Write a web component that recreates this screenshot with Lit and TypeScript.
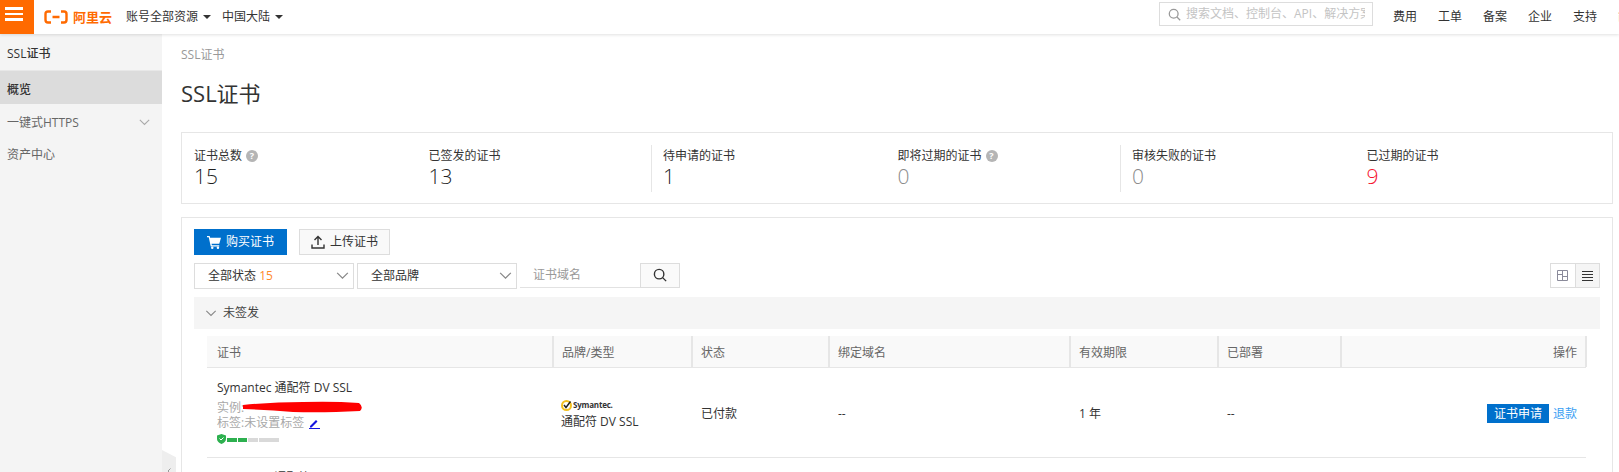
import { LitElement, html, css } from "lit";
import { customElement } from "lit/decorators.js";

const chevron = () => html`<svg viewBox="0 0 14 9" fill="none" stroke="currentColor" stroke-width="1.4"><path d="M1 1l6 6 6-6"/></svg>`;
const help = html`<span class="help">?</span>`;
const searchIcon = () => html`<svg viewBox="0 0 16 16" fill="none" stroke="currentColor" stroke-width="1.6"><circle cx="7" cy="7" r="5.4"/><path d="M11 11l4 4"/></svg>`;

const stats = [
  { label: "证书总数", value: "15", help: true, tone: "" },
  { label: "已签发的证书", value: "13", tone: "" },
  { label: "待申请的证书", value: "1", tone: "", div: true },
  { label: "即将过期的证书", value: "0", help: true, tone: "zero" },
  { label: "审核失败的证书", value: "0", tone: "zero", div: true },
  { label: "已过期的证书", value: "9", tone: "red" },
];
const cols = ["证书", "品牌/类型", "状态", "绑定域名", "有效期限", "已部署", "操作"];

@customElement("app-root")
export class AppRoot extends LitElement {
  static styles = css`
    :host { display: block; width: 1619px; height: 472px; overflow: hidden; background: #fff;
      font: 12px/18px "Open Sans", "Noto Sans CJK SC", sans-serif; color: #333; }
    * { box-sizing: border-box; }
    .top { height: 34px; display: flex; align-items: center; background: #fff; box-shadow: 0 1px 3px rgba(0,0,0,.12); position: relative; z-index: 2; }
    .burger { width: 34px; height: 34px; background: #ff6a00; display: flex; flex-direction: column; gap: 3px; padding: 7px 11px 0 5px; }
    .burger i { display: block; height: 2.5px; background: #fff; }
    .logo { margin-left: 10px; width: 66px; height: 20px; display: flex; flex: none; align-items: center; gap: 5px; color: #ff6a00; font-weight: 700; font-size: 13px; white-space: nowrap; }
    .logo svg { width: 24px; height: 14px; flex: none; }
    .menu { display: flex; align-items: center; margin-left: 16px; white-space: nowrap; color: #333; }
    .menu + .menu { margin-left: 11px; }
    .caret { width: 0; height: 0; border: 4px solid transparent; border-top: 4px solid #333; border-bottom: 0; margin-left: 5px; }
    .spacer { flex: 1; }
    .search { width: 214px; height: 24px; margin-top: -6px; border: 1px solid #ddd; display: flex; flex: none; align-items: center; padding-left: 8px; gap: 5px; color: #c4c4c4; overflow: hidden; white-space: nowrap; margin-right: 20px; }
    .search svg { width: 13px; height: 13px; flex: none; color: #999; }
    .search span { width: 179px; flex: none; overflow: hidden; }
    .links { display: flex; gap: 21px; white-space: nowrap; width: 226px; flex: none; overflow: hidden; }
    .links span { flex: none; }
    .layout { display: flex; height: 438px; }
    .side { width: 162px; flex: none; background: #f4f4f4; position: relative; }
    .side-title { height: 37px; padding: 4px 7px 0; display: flex; align-items: center; font-weight: 500; border-bottom: 1px solid #e8e8e8; }
    .side-item { height: 32.5px; padding: 6px 7px 0; display: flex; align-items: center; justify-content: space-between; color: #666; }
    .side-item.on { background: #dcdcdc; color: #333; font-weight: 500; }
    .side-item svg { width: 11px; height: 7px; color: #aaa; margin-right: 5px; }
    .handle { position: absolute; left: 162px; top: 416px; width: 14px; height: 30px; background: #eeeeee; clip-path: polygon(0 0, 100% 24%, 100% 100%, 0 100%); display: flex; align-items: flex-end; justify-content: center; padding-bottom: 6px; }
    .handle svg { width: 4px; height: 6px; }
    .main { flex: 1; padding: 12px 6px 0 19px; min-width: 0; }
    .crumb { color: #999; height: 18px; }
    h1 { margin: 14px 0 0; font-weight: 400; font-size: 22px; line-height: 30px; color: #333; height: 30px; }
    .stats { margin-top: 24px; height: 72px; border: 1px solid #e6e6e6; display: grid; grid-template-columns: repeat(6, 234.5px); padding-top: 12px; }
    .stat { height: 47px; padding: 3px 0 0 11px; border-left: 1px solid transparent; }
    .stat.div { border-left-color: #e6e6e6; }
    .stat .l { display: flex; align-items: center; gap: 4px; line-height: 16px; height: 16px; }
    .help { width: 12px; height: 12px; border-radius: 50%; background: #b5b5b5; color: #fff; font-size: 9px; line-height: 12px; text-align: center; font-weight: 700; }
    .stat .v { font-size: 21px; line-height: 26px; margin-top: -1px; color: #1f1f1f; font-weight: 300; }
    .stat .v.zero { color: #8c8c8c; }
    .stat .v.red { color: #f5122d; }
    .panel { margin-top: 13px; border: 1px solid #e6e6e6; border-bottom: 0; height: 260px; padding: 11px 12px 0; }
    .actions { display: flex; gap: 12px; height: 26px; }
    .btn { height: 26px; display: flex; align-items: center; justify-content: center; gap: 5px; }
    .btn.primary { width: 93px; background: #0070cc; color: #fff; }
    .btn.ghost { width: 91px; border: 1px solid #ddd; background: #f9f9f9; color: #333; }
    .btn svg { width: 14px; height: 14px; }
    .filters { display: flex; gap: 3px; margin-top: 8px; height: 26px; }
    .select { width: 160px; height: 26px; border: 1px solid #ddd; display: flex; align-items: center; justify-content: space-between; padding: 0 4px 0 13px; background: #fff; }
    .select svg { width: 13px; height: 8px; color: #888; }
    .select b { color: #ff8a2b; font-weight: 400; }
    .domain { width: 160px; height: 25px; display: flex; border-bottom: 1px solid #e2e2e2; color: #999; align-items: center; }
    .domain span { flex: 1; padding-left: 13px; }
    .domain div { width: 40px; height: 25px; border: 1px solid #ddd; background: #fafafa; display: flex; align-items: center; justify-content: center; color: #333; }
    .domain svg { width: 14px; height: 14px; }
    .toggle { margin-left: auto; width: 50px; height: 25px; display: flex; border: 1px solid #ddd; }
    .toggle div { flex: 1; display: flex; align-items: center; justify-content: center; }
    .toggle div + div { border-left: 1px solid #ddd; background: #f5f5f5; }
    .toggle svg { width: 11px; height: 11px; }
    .group { margin-top: 8px; height: 32px; background: #f5f5f5; display: flex; align-items: center; gap: 6px; padding-left: 11px; color: #444; }
    .group svg { width: 12px; height: 7px; color: #888; }
    .table { margin: 7px 14px 0 13px; }
    .grid { display: grid; grid-template-columns: 345px 139px 137px 241px 148px 123px 247px; }
    .head { height: 32px; background: #f9f9f9; border-bottom: 1px solid #e6e6e6; color: #666; }
    .head div { height: 31px; line-height: 34px; padding-left: 8px; border-left: 2px solid #e6e6e6; }
    .head div:first-child { border-left: 0; padding-left: 10px; }
    .head div:last-child { text-align: right; padding-right: 8px; border-right: 2px solid #e6e6e6; }
    .row { height: 90px; border-bottom: 1px solid #e6e6e6; color: #333; }
    .cell { padding: 2px 0 0 10px; display: flex; align-items: center; }
    .cert { padding: 11px 0 0 10px; display: block; position: relative; line-height: 16px; }
    .cert .muted { color: #a8a8a8; display: flex; align-items: center; gap: 5px; height: 15.5px; }
    .cert .name { height: 18px; margin-bottom: 3px; line-height: 18px; }
    .scribble { position: absolute; left: 36px; top: 33px; width: 119px; height: 12px; }
    .edit { width: 11px; height: 11px; }
    .level { display: flex; align-items: center; gap: 1px; margin-top: 4px; height: 10px; }
    .level svg { width: 9px; height: 10px; margin-top: -3px; }
    .level i { display: block; height: 4px; width: 9.5px; background: #2db04f; }
    .level i.off { background: #d9d9d9; }
    .level i.long { width: 20px; }
    .brand { padding-left: 9px; display: block; padding-top: 29px; }
    .sym { display: flex; align-items: center; gap: 1px; height: 16px; font-size: 8px; font-weight: 700; color: #333; letter-spacing: -.2px; }
    .sym svg { width: 11px; height: 11px; }
    .ops { justify-content: flex-end; padding-right: 10px; gap: 4px; }
    .apply { width: 62px; height: 19px; background: #0070cc; color: #fff; display: flex; align-items: center; justify-content: center; }
    .ops a { color: #3aa0f3; }
    .next { padding: 11px 0 0 10px; line-height: 18px; }
  `;

  render() {
    return html`
      <div class="top">
        <div class="burger"><i></i><i></i><i></i></div>
        <div class="logo">
          <svg viewBox="0 0 24 14" fill="none" stroke="#ff6a00" stroke-width="2.4"><path d="M7 1.500H4Q1.500 1.500 1.500 4v6q0 2.500 2.500 2.500h3M17 1.500h3q2.500 0 2.500 2.500v6q0 2.500-2.500 2.500h-3M8.500 7h7" /></svg>
          <span>阿里云</span>
        </div>
        <div class="menu">账号全部资源<span class="caret"></span></div>
        <div class="menu">中国大陆<span class="caret"></span></div>
        <div class="spacer"></div>
        <div class="search">${searchIcon()}<span>搜索文档、控制台、API、解决方案和资源</span></div>
        <div class="links"><span>费用</span><span>工单</span><span>备案</span><span>企业</span><span>支持</span><span>简体</span></div>
      </div>
      <div class="layout">
        <aside class="side">
          <div class="side-title">SSL证书</div>
          <div class="side-item on">概览</div>
          <div class="side-item">一键式HTTPS${chevron()}</div>
          <div class="side-item">资产中心</div>
          <div class="handle"><svg viewBox="0 0 4 6" fill="none" stroke="#999"><path d="M3.500.500L1 3l2.500 2.500"/></svg></div>
        </aside>
        <main class="main">
          <div class="crumb">SSL证书</div>
          <h1>SSL证书</h1>
          <section class="stats">
            ${stats.map((s) => html`<div class="stat ${s.div ? "div" : ""}">
              <div class="l">${s.label}${s.help ? help : ""}</div>
              <div class="v ${s.tone}">${s.value}</div>
            </div>`)}
          </section>
          <section class="panel">
            <div class="actions">
              <div class="btn primary">
                <svg viewBox="0 0 16 16" fill="#fff"><path d="M0 1h3l.6 2H16l-2 7H5.200l.4 1.600H14V13H4.300L2 2.600H0z"/><circle cx="6" cy="14.600" r="1.400"/><circle cx="12.500" cy="14.600" r="1.400"/></svg>
                购买证书
              </div>
              <div class="btn ghost">
                <svg viewBox="0 0 14 14" fill="none" stroke="#333" stroke-width="1.400"><path d="M7 10V2M3.500 5L7 1.500 10.500 5M1 9.500V13h12V9.500"/></svg>
                上传证书
              </div>
            </div>
            <div class="filters">
              <div class="select"><span>全部状态 <b>15</b></span>${chevron()}</div>
              <div class="select"><span>全部品牌</span>${chevron()}</div>
              <div class="domain"><span>证书域名</span><div>${searchIcon()}</div></div>
              <div class="toggle">
                <div><svg viewBox="0 0 11 11" fill="none" stroke="#8a8a9a"><path d="M.5.5h10v10H.5zM5.500.5v10M.5 4.500h5M5.500 6.500h5"/></svg></div>
                <div><svg viewBox="0 0 11 11" fill="none" stroke="#333"><path d="M0 1.500h11M0 4.500h11M0 7.500h11M0 10.500h11"/></svg></div>
              </div>
            </div>
            <div class="group">${chevron()}未签发</div>
            <div class="table">
              <div class="grid head">${cols.map((c) => html`<div>${c}</div>`)}</div>
              <div class="grid row">
                <div class="cert">
                  <div class="name">Symantec 通配符 DV SSL</div>
                  <div class="muted">实例:</div>
                  <div class="muted">标签:未设置标签
                    <svg class="edit" viewBox="0 0 11 11" fill="#1414e0"><path d="M1 8l6-6 1.500 1.500-6 6H1zM0 10h11v1H0z"/></svg>
                  </div>
                  <div class="level">
                    <svg viewBox="0 0 9 10"><path d="M4.500 0L9 1.500V5q0 3-4.500 5Q0 8 0 5V1.500z" fill="#2db04f"/><path d="M2.500 4.500l1.500 1.500 2.500-2.500" stroke="#fff" fill="none"/></svg>
                    <i></i><i></i><i class="off"></i><i class="off long"></i>
                  </div>
                  <svg class="scribble" viewBox="0 0 119 12"><path d="M0 4Q30 1 60 1Q90 0 116 2Q121 6 117 10Q80 12 50 11Q25 9 0 8z" fill="#f00"/></svg>
                </div>
                <div class="brand">
                  <div class="sym">
                    <svg viewBox="0 0 11 11"><circle cx="5.500" cy="5.500" r="4.500" fill="none" stroke="#f4c01e" stroke-width="2"/><path d="M3 5l2 2.500L9.500 1.500" fill="none" stroke="#222" stroke-width="1.500"/></svg>
                    Symantec.
                  </div>
                  <div>通配符 DV SSL</div>
                </div>
                <div class="cell">已付款</div>
                <div class="cell">--</div>
                <div class="cell">1 年</div>
                <div class="cell">--</div>
                <div class="cell ops"><span class="apply">证书申请</span><a>退款</a></div>
              </div>
              <div class="next">Symantec 通配符 DV SSL</div>
            </div>
          </section>
        </main>
      </div>
    `;
  }
}
